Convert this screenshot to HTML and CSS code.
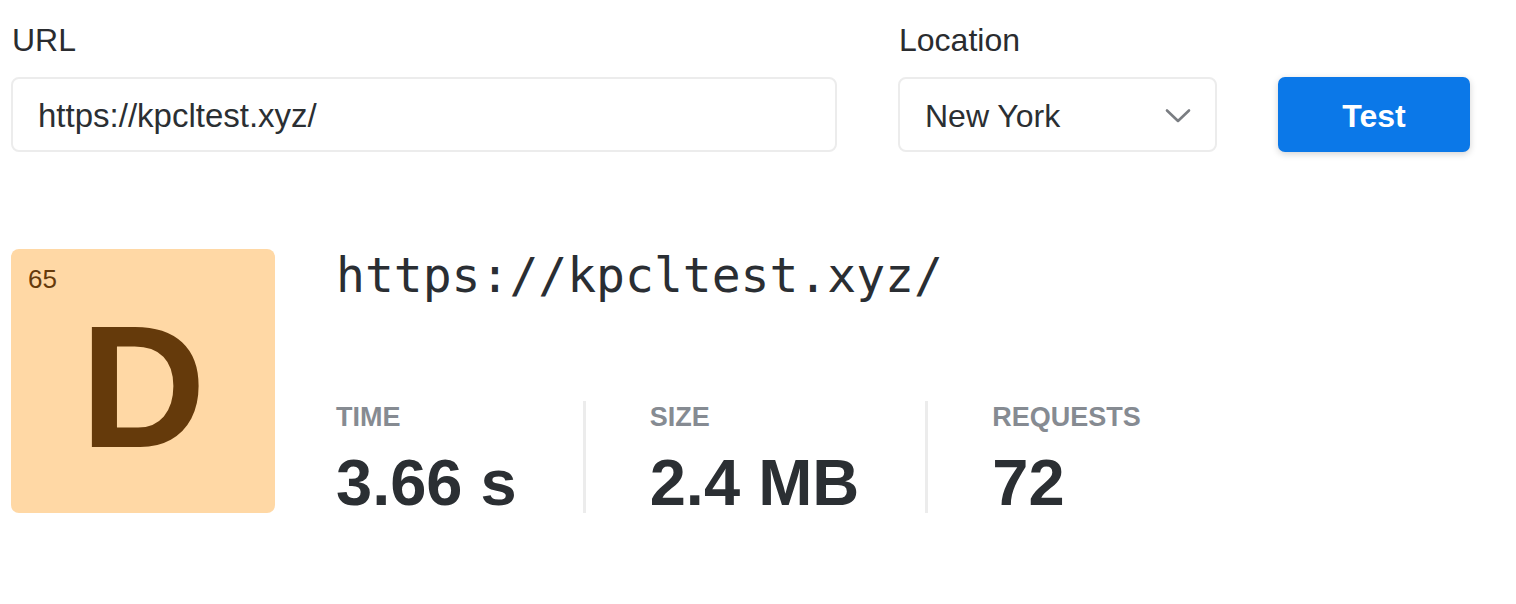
FILE: index.html
```html
<!DOCTYPE html>
<html lang="en">
<head>
    <meta charset="UTF-8" />
    <meta name="viewport" content="width=device-width, initial-scale=1.0"/>
    <title>Page Speed Test</title>
    <link rel="stylesheet" href="styles.css">
</head>
<body>
<div class="page">
    <form class="test-form" onsubmit="return false;">
        <div class="form-group url-group">
            <label for="url">URL</label>
            <input type="text" id="url" value="https://kpcltest.xyz/">
        </div>

        <div class="form-group location-group">
            <label for="location">Location</label>
            <div class="select-wrap">
                <select id="location">
                    <option>New York</option>
                    <option>London</option>
                    <option>Tokyo</option>
                </select>
                <svg class="chevron" width="26" height="16" viewBox="0 0 26 16" fill="none">
                    <path d="M2 2.5 L13 13 L24 2.5" stroke="#7a7d82" stroke-width="2.6" stroke-linecap="round" stroke-linejoin="round"/>
                </svg>
            </div>
        </div>

        <button type="submit" class="test-btn">Test</button>
    </form>

    <div class="result">
        <div class="grade">
            <span class="score">65</span>
            <span class="letter">D</span>
        </div>

        <div class="summary">
            <div class="tested-url">https://kpcltest.xyz/</div>

            <div class="stats">
                <div class="stat">
                    <div class="stat-label">TIME</div>
                    <div class="stat-value">3.66 s</div>
                </div>
                <div class="stat">
                    <div class="stat-label">SIZE</div>
                    <div class="stat-value">2.4 MB</div>
                </div>
                <div class="stat">
                    <div class="stat-label">REQUESTS</div>
                    <div class="stat-value">72</div>
                </div>
            </div>
        </div>
    </div>
</div>
</body>
</html>
```

FILE: styles.css
```css
* {
    box-sizing: border-box;
    margin: 0;
    padding: 0;
    font-family: 'Liberation Sans', Arial, Helvetica, sans-serif;
}

body {
    background-color: #ffffff;
    color: #2b2f33;
}

.page {
    padding: 21px 46px 0 11px;
}

.test-form {
    display: flex;
    align-items: flex-end;
    gap: 61px;
}

.url-group {
    flex: 1;
}

.location-group {
    width: 319px;
}

label {
    display: block;
    font-size: 32px;
    line-height: 38px;
    color: #2a2c2f;
    margin-bottom: 18px;
    padding-left: 1px;
}

input,
select {
    display: block;
    width: 100%;
    height: 75px;
    padding: 2px 25px 0;
    border: 2px solid #ececec;
    border-radius: 8px;
    background-color: #fff;
    font-size: 33px;
    color: #2b2f33;
    outline: none;
}

.select-wrap {
    position: relative;
}

select {
    appearance: none;
    -webkit-appearance: none;
    font-size: 32px;
}

.chevron {
    position: absolute;
    right: 26px;
    top: 31px;
    pointer-events: none;
}

.test-btn {
    width: 192px;
    height: 75px;
    padding-top: 3px;
    border: none;
    border-radius: 7px;
    background-color: #0b78e8;
    color: #fff;
    font-size: 32px;
    font-weight: 700;
    cursor: pointer;
    box-shadow: 0 2px 7px rgba(0, 0, 0, 0.18);
}

.result {
    display: flex;
    gap: 61px;
    margin-top: 97px;
}

.grade {
    position: relative;
    width: 264px;
    height: 264px;
    border-radius: 8px;
    background-color: #ffd8a5;
    color: #653a0b;
    display: flex;
    align-items: center;
    justify-content: center;
}

.score {
    position: absolute;
    top: 15px;
    left: 17px;
    font-size: 26px;
    line-height: 30px;
}

.letter {
    font-size: 174px;
    font-weight: 700;
    line-height: 1;
    margin-top: 12px;
}

.summary {
    display: flex;
    flex-direction: column;
    justify-content: space-between;
    height: 264px;
}

.tested-url {
    font-family: 'DejaVu Sans Mono', 'Liberation Mono', monospace;
    font-size: 48px;
    line-height: 48px;
    margin-top: 2px;
    color: #2a2e33;
}

.stats {
    display: flex;
}

.stat {
    padding: 0 66px 0 64px;
}

.stat:first-child {
    padding-left: 0;
}

.stat + .stat {
    border-left: 3px solid #ececec;
}

.stat-label {
    font-size: 27px;
    line-height: 27px;
    font-weight: 700;
    padding-top: 3px;
    color: #868b92;
}

.stat-value {
    font-size: 65px;
    line-height: 60px;
    font-weight: 700;
    margin-top: 22px;
    color: #2b2f33;
}
```
